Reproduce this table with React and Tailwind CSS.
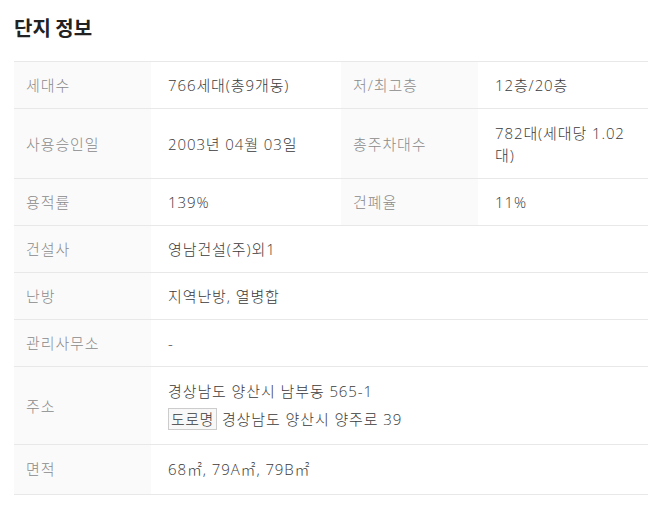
import React from 'react';

const font = { fontFamily: '"Open Sans", "Noto Sans CJK KR", sans-serif' };

function Label({ children, className = '' }) {
  return (
    <div className={`flex items-center bg-[#fafafa] pl-3 text-[#8a8a8a] ${className}`}>{children}</div>
  );
}

function Value({ children, className = '' }) {
  return <div className={`flex items-center pl-[17px] pr-3 text-[#3a3a3a] ${className}`}>{children}</div>;
}

export default function App() {
  return (
    <div className="min-h-screen bg-white pl-[14px] pr-[15px] pt-[14px]" style={font}>
      <h2
        className="mb-[19px] text-[20px] font-bold leading-[28px] text-[#222]"
        style={{ fontFamily: '"Noto Sans CJK KR", sans-serif' }}
      >
        단지 정보
      </h2>
      <div className="grid grid-cols-[137px_190px_137px_170px] border-b border-[#e8e8e8] text-[15px] font-light leading-[22px] tracking-[0.9px]">
        {/* row 1 */}
        <Label className="h-[47px] border-t border-[#e8e8e8]">세대수</Label>
        <Value className="h-[47px] border-t border-[#e8e8e8]">766세대(총9개동)</Value>
        <Label className="h-[47px] border-t border-[#e8e8e8]">저/최고층</Label>
        <Value className="h-[47px] border-t border-[#e8e8e8]">12층/20층</Value>

        {/* row 2 */}
        <Label className="h-[70px] border-t border-[#e8e8e8]">사용승인일</Label>
        <Value className="h-[70px] border-t border-[#e8e8e8]">2003년 04월 03일</Value>
        <Label className="h-[70px] border-t border-[#e8e8e8]">총주차대수</Label>
        <Value className="h-[70px] border-t border-[#e8e8e8]">782대(세대당 1.02 대)</Value>

        {/* row 3 */}
        <Label className="h-[47px] border-t border-[#e8e8e8]">용적률</Label>
        <Value className="h-[47px] border-t border-[#e8e8e8]">139%</Value>
        <Label className="h-[47px] border-t border-[#e8e8e8]">건폐율</Label>
        <Value className="h-[47px] border-t border-[#e8e8e8]">11%</Value>

        <Label className="h-[47px] border-t border-[#e8e8e8]">건설사</Label>
        <Value className="col-span-3 h-[47px] border-t border-[#e8e8e8]">영남건설(주)외1</Value>

        <Label className="h-[47px] border-t border-[#e8e8e8]">난방</Label>
        <Value className="col-span-3 h-[47px] border-t border-[#e8e8e8]">지역난방, 열병합</Value>

        <Label className="h-[47px] border-t border-[#e8e8e8]">관리사무소</Label>
        <Value className="col-span-3 h-[47px] border-t border-[#e8e8e8]">-</Value>

        <Label className="h-[78px] border-t border-[#e8e8e8]">주소</Label>
        <div className="col-span-3 flex h-[78px] flex-col justify-center gap-[6px] border-t border-[#e8e8e8] pb-[2px] pl-[17px] text-[#3a3a3a]">
          <div>경상남도 양산시 남부동 565-1</div>
          <div className="flex items-center">
            <span className="mr-[5px] border border-[#ccc] bg-[#f8f8f8] px-[2px] leading-[20px] tracking-[0.5px]">도로명</span>
            경상남도 양산시 양주로 39
          </div>
        </div>

        <Label className="h-[50px] border-t border-[#e8e8e8] pb-[2px]">면적</Label>
        <Value className="col-span-3 h-[50px] border-t border-[#e8e8e8] pb-[2px]">
          68㎡, 79A㎡, 79B㎡
        </Value>
      </div>
    </div>
  );
}
